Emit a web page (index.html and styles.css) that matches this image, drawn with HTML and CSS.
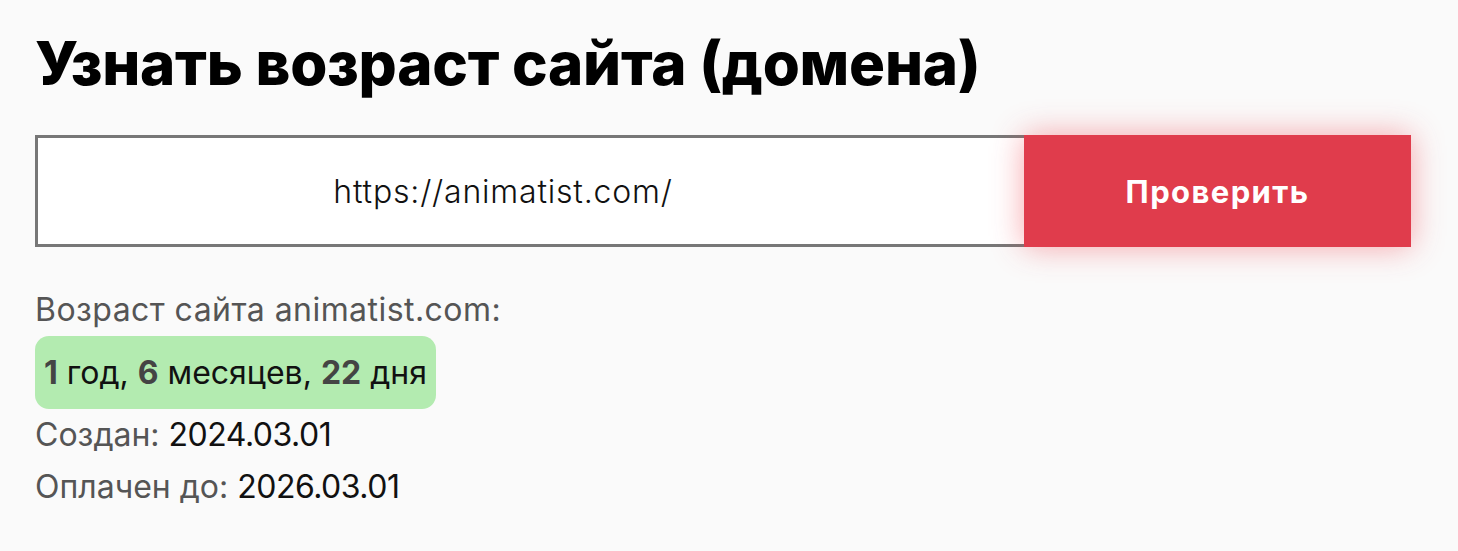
FILE: index.html
```html
<!DOCTYPE html>
<html lang="ru">

<head>
    <meta charset="UTF-8">
    <meta name="viewport" content="width=device-width, initial-scale=1.0">
    <title>Узнать возраст сайта</title>
    <link rel="stylesheet" href="styles.css">
</head>

<body>
    <div id="page">
        <h1 class="title">Узнать возраст сайта (домена)</h1>
        <form class="checker">
            <input class="checker-input" type="text" value="https://animatist.com/">
            <button class="checker-button" type="button">Проверить</button>
        </form>
        <div class="result">
            <p class="result-line result-head">Возраст сайта animatist.com:</p>
            <p class="age"><b>1</b> год, <b>6</b> месяцев, <b>22</b> дня</p>
            <p class="result-line">Создан: <span class="value">2024.03.01</span></p>
            <p class="result-line">Оплачен до: <span class="value">2026.03.01</span></p>
        </div>
    </div>
</body>

</html>
```

FILE: styles.css
```css
body {
    margin: 0;
    background-color: #fafafa;
    font-family: "Inter", "DejaVu Sans", sans-serif;
}

#page {
    padding: 28px 35px 0 35px;
}

.title {
    margin: 0;
    font-size: 60px;
    font-weight: 800;
    line-height: 70px;
    letter-spacing: -0.25px;
    color: #000;
}

.checker {
    display: flex;
    margin-top: 37px;
    width: 1376px;
    height: 112px;
}

.checker-input {
    box-sizing: border-box;
    width: 989px;
    height: 112px;
    border: 3px solid #777;
    border-right: none;
    background-color: #fff;
    padding: 0 56px 0 0;
    font-family: "Inter", sans-serif;
    font-weight: 300;
    font-size: 32px;
    letter-spacing: 0.8px;
    color: #111;
    text-align: center;
    outline: none;
}

.checker-button {
    width: 387px;
    height: 112px;
    border: none;
    background-color: #e03c4c;
    color: #fff;
    font-family: "Inter", sans-serif;
    font-weight: 700;
    font-size: 31px;
    letter-spacing: 1.4px;
    box-shadow: 0 0 30px rgba(240, 60, 70, 0.45);
}

.result {
    margin-top: 37px;
}

.result-line {
    margin: 0;
    font-size: 32px;
    line-height: 52px;
    color: #555;
}

.result-head {
    letter-spacing: 0.45px;
}

.value {
    color: #111;
    letter-spacing: -0.5px;
}

.age {
    display: inline-block;
    margin: 0;
    padding: 0 9px;
    height: 73px;
    line-height: 73px;
    border-radius: 14px;
    background-color: #b3ebb0;
    font-size: 32px;
    color: #111;
}

.age b {
    color: #444;
}
```
